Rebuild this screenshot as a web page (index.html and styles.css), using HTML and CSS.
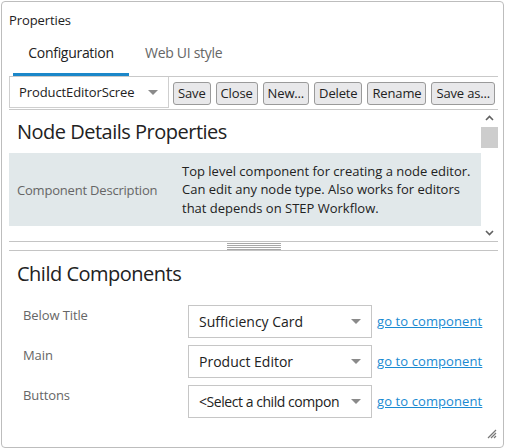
FILE: index.html
```html
<!DOCTYPE html>
<html>
<head>
<meta charset="utf-8">
<link rel="stylesheet" href="styles.css">
</head>
<body>
<div class="panel">
  <div class="title">Properties</div>
  <div class="tabs">
    <div class="tab active">Configuration</div>
    <div class="tab">Web UI style</div>
  </div>
  <div class="toolbar">
    <div class="combo">
      <span class="combo-text">ProductEditorScree</span>
      <span class="caret"></span>
    </div>
    <button class="btn">Save</button>
    <button class="btn">Close</button>
    <button class="btn">New...</button>
    <button class="btn">Delete</button>
    <button class="btn">Rename</button>
    <button class="btn">Save as...</button>
  </div>
  <div class="scroller">
    <div class="scroll-content">
      <h2 class="heading">Node Details Properties</h2>
      <div class="prop-row">
        <div class="prop-label">Component Description</div>
        <div class="prop-value">Top level component for creating a node editor. Can edit any node type. Also works for editors that depends on STEP Workflow.</div>
      </div>
    </div>
    <div class="scrollbar">
      <svg class="arrow" width="17" height="17" viewBox="0 0 17 17"><path d="M5 10 L8.5 6.5 L12 10" fill="none" stroke="#606060" stroke-width="1.6"/></svg>
      <div class="thumb"></div>
      <div class="track"></div>
      <svg class="arrow" width="17" height="17" viewBox="0 0 17 17"><path d="M5 7 L8.5 10.5 L12 7" fill="none" stroke="#606060" stroke-width="1.6"/></svg>
    </div>
  </div>
  <div class="splitter"><div class="grip"></div></div>
  <h2 class="heading child-heading">Child Components</h2>
  <div class="children">
    <div class="child-row">
      <div class="child-label">Below Title</div>
      <div class="select"><span class="select-text">Sufficiency Card</span><span class="caret"></span></div>
      <a class="link" href="#">go to component</a>
    </div>
    <div class="child-row">
      <div class="child-label">Main</div>
      <div class="select"><span class="select-text">Product Editor</span><span class="caret"></span></div>
      <a class="link" href="#">go to component</a>
    </div>
    <div class="child-row">
      <div class="child-label">Buttons</div>
      <div class="select"><span class="select-text narrow">&lt;Select a child compon</span><span class="caret"></span></div>
      <a class="link" href="#">go to component</a>
    </div>
  </div>
  <svg class="resize" width="12" height="12" viewBox="0 0 12 12">
    <path d="M11 3 L3 11 M11 6 L6 11 M11 9 L9 11" stroke="#777" stroke-width="1.2"/>
  </svg>
</div>
</body>
</html>
```
FILE: styles.css
```css
* { box-sizing: border-box; }
body {
  margin: 0;
  font-family: "Open Sans", "Noto Sans", sans-serif;
  color: #222;
  background: #fff;
}
.panel {
  position: relative;
  margin: 1px 0 0 1px;
  width: 503px;
  height: 447px;
  border: 1px solid #bdbdbd;
  border-radius: 4px;
  background: #fff;
}
.title {
  font-size: 13px;
  padding: 8px 0 0 7px;
  line-height: 20px;
  height: 31px;
  letter-spacing: -0.1px;
}
.tabs {
  display: flex;
  margin-left: 11px;
  height: 43px;
}
.tab {
  font-size: 14px;
  color: #666;
  padding: 0 16px;
  height: 43px;
  line-height: 40px;
  border-bottom: 3px solid transparent;
  letter-spacing: -0.3px;
}
.tab.active {
  color: #222;
  border-bottom-color: #1b87c9;
}
.tab:first-child { width: 116px; text-align: center; padding: 0; }
.toolbar {
  display: flex;
  align-items: center;
  margin: 0 5px 0 7px;
  height: 34px;
  border-top: 1px solid #c9c9c9;
  border-bottom: 1px solid #c9c9c9;
}
.combo {
  align-self: flex-start;
  flex: none;
  width: 160px;
  height: 31px;
  border: 1px solid #cfcfcf;
  border-top: none;
  display: flex;
  align-items: center;
  padding: 0 10px 0 9px;
  font-size: 13px;
  letter-spacing: -0.1px;
}
.combo-text { flex: 1; white-space: nowrap; overflow: hidden; }
.caret {
  flex: none;
  width: 0;
  height: 0;
  border-left: 5px solid transparent;
  border-right: 5px solid transparent;
  border-top: 5px solid #8a8a8a;
  margin-left: 6px;
}
.btn {
  flex: none;
  white-space: nowrap;
  font-family: inherit;
  font-size: 13px;
  letter-spacing: -0.15px;
  height: 23px;
  margin-left: 5px;
  padding: 0 4px;
  border: 1px solid #9a9a9a;
  border-radius: 3px;
  background: #e8e8ea;
  color: #222;
  line-height: 20px;
}
.toolbar .combo + .btn { margin-left: 4px; }
.scroller {
  display: flex;
  margin: 0 5px 0 7px;
  height: 131px;
}
.scroll-content {
  flex: 1;
  overflow: hidden;
}
.heading {
  margin: 0;
  font-weight: normal;
  font-size: 20px;
  line-height: 26px;
  padding: 9px 0 0 8px;
  height: 43px;
  letter-spacing: -0.5px;
}
.prop-row {
  display: flex;
  align-items: center;
  background: #e1e8ea;
  height: 73px;
}
.prop-label {
  width: 173px;
  padding-left: 8px;
  color: #666;
  font-size: 13px;
  letter-spacing: -0.2px;
}
.prop-value {
  flex: 1;
  font-size: 13px;
  line-height: 18.5px;
  letter-spacing: 0;
  padding-right: 4px;
}
.scrollbar {
  width: 17px;
  display: flex;
  flex-direction: column;
}
.arrow { display: block; flex: none; }
.thumb { height: 21px; background: #cdcdcd; flex: none; }
.track { flex: 1; }
.splitter {
  margin: 0 5px 0 7px;
  height: 10px;
  border-top: 1px solid #c4c4c4;
  border-bottom: 1px solid #c4c4c4;
  display: flex;
  justify-content: center;
}
.grip {
  width: 54px;
  height: 7px;
  margin-top: 1px;
  background: repeating-linear-gradient(to bottom, #a8a8a8 0, #a8a8a8 1px, transparent 1px, transparent 2px);
}
.child-heading {
  padding-top: 10px;
  height: 54px;
  padding-left: 15px;
}
.children {
  padding-left: 21px;
}
.child-row {
  display: flex;
  align-items: flex-start;
  height: 40px;
}
.child-label {
  width: 165px;
  font-size: 13px;
  color: #666;
  letter-spacing: -0.1px;
  line-height: 18px;
  padding-top: 1px;
}
.select {
  flex: none;
  width: 184px;
  height: 33px;
  border: 1px solid #c6c6c6;
  display: flex;
  align-items: center;
  padding: 0 10px 0 10px;
  font-size: 14px;
  letter-spacing: 0;
}
.select-text { flex: 1; white-space: nowrap; }
.select-text.narrow { letter-spacing: -0.45px; }
.link {
  margin-left: 5px;
  font-size: 13px;
  color: #1a8ad2;
  line-height: 33px;
  letter-spacing: 0.1px;
}
.resize {
  position: absolute;
  right: 6px;
  bottom: 8px;
}
```
